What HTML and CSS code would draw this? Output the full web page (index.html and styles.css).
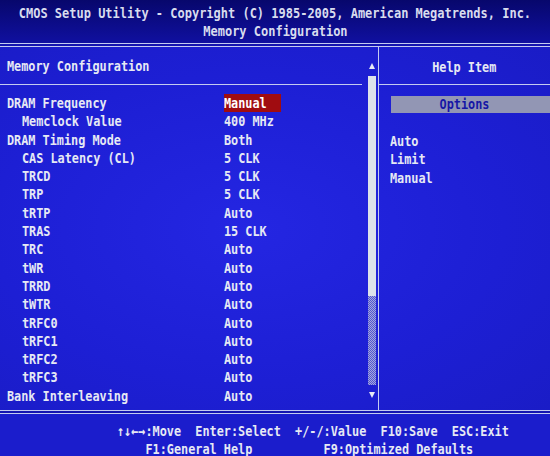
FILE: index.html
```html
<!DOCTYPE html>
<html lang="en">
<head>
<meta charset="utf-8">
<title>CMOS Setup Utility - Memory Configuration</title>
<link rel="stylesheet" href="styles.css">
</head>
<body>
<div class="screen">
  <header class="top">
    <div class="title"><span class="t">CMOS Setup Utility - Copyright (C) 1985-2005, American Megatrends, Inc.</span></div>
    <div class="title"><span class="t">Memory Configuration</span></div>
  </header>
  <div class="rule"></div>
  <main class="body">
    <section class="menu">
      <div class="menu-head"><span class="t">Memory Configuration</span></div>
      <ul class="rows">
        <li class="row"><span class="label"><span class="t">DRAM Frequency</span></span><span class="value sel"><span class="t">Manual</span></span></li>
        <li class="row sub"><span class="label"><span class="t">Memclock Value</span></span><span class="value"><span class="t">400 MHz</span></span></li>
        <li class="row"><span class="label"><span class="t">DRAM Timing Mode</span></span><span class="value"><span class="t">Both</span></span></li>
        <li class="row sub"><span class="label"><span class="t">CAS Latency (CL)</span></span><span class="value"><span class="t">5 CLK</span></span></li>
        <li class="row sub"><span class="label"><span class="t">TRCD</span></span><span class="value"><span class="t">5 CLK</span></span></li>
        <li class="row sub"><span class="label"><span class="t">TRP</span></span><span class="value"><span class="t">5 CLK</span></span></li>
        <li class="row sub"><span class="label"><span class="t">tRTP</span></span><span class="value"><span class="t">Auto</span></span></li>
        <li class="row sub"><span class="label"><span class="t">TRAS</span></span><span class="value"><span class="t">15 CLK</span></span></li>
        <li class="row sub"><span class="label"><span class="t">TRC</span></span><span class="value"><span class="t">Auto</span></span></li>
        <li class="row sub"><span class="label"><span class="t">tWR</span></span><span class="value"><span class="t">Auto</span></span></li>
        <li class="row sub"><span class="label"><span class="t">TRRD</span></span><span class="value"><span class="t">Auto</span></span></li>
        <li class="row sub"><span class="label"><span class="t">tWTR</span></span><span class="value"><span class="t">Auto</span></span></li>
        <li class="row sub"><span class="label"><span class="t">tRFC0</span></span><span class="value"><span class="t">Auto</span></span></li>
        <li class="row sub"><span class="label"><span class="t">tRFC1</span></span><span class="value"><span class="t">Auto</span></span></li>
        <li class="row sub"><span class="label"><span class="t">tRFC2</span></span><span class="value"><span class="t">Auto</span></span></li>
        <li class="row sub"><span class="label"><span class="t">tRFC3</span></span><span class="value"><span class="t">Auto</span></span></li>
        <li class="row"><span class="label"><span class="t">Bank Interleaving</span></span><span class="value"><span class="t">Auto</span></span></li>
      </ul>
    </section>
    <div class="scroll">
      <span class="arrow up"></span>
      <div class="track"><div class="thumb"></div></div>
      <span class="arrow down"></span>
    </div>
    <aside class="help">
      <div class="help-head"><span class="t">Help Item</span></div>
      <div class="options"><span class="t">Options</span></div>
      <ul class="choices">
        <li><span class="t">Auto</span></li>
        <li><span class="t">Limit</span></li>
        <li><span class="t">Manual</span></li>
      </ul>
    </aside>
  </main>
  <div class="rule"></div>
  <footer class="keys">
    <div class="keyline"><span class="t">↑↓←→:Move  Enter:Select  +/-/:Value  F10:Save  ESC:Exit</span></div>
    <div class="keyline"><span class="t">    F1:General Help          F9:Optimized Defaults</span></div>
  </footer>
</div>
</body>
</html>
```
FILE: styles.css
```css
* { box-sizing: border-box; }

html, body {
  margin: 0;
  padding: 0;
  background: #1a1cc8;
}

.screen {
  width: 550px;
  height: 456px;
  overflow: hidden;
  font-family: "DejaVu Sans Mono", "Liberation Mono", monospace;
  font-weight: bold;
  font-size: 14.5px;
  color: #e6e9f4;
  background: #1d1fd2;
}

.t {
  display: inline-block;
  flex: none;
  white-space: pre;
  transform: scaleX(0.816);
  transform-origin: left center;
}

ul { list-style: none; margin: 0; padding: 0; }

/* header */
.top {
  height: 43px;
  padding-top: 4px;
  background: linear-gradient(#07076c, #1010a0);
  color: #d8dcee;
}
.title {
  display: flex;
  justify-content: center;
  height: 18px;
  line-height: 18px;
  font-size: 14.7px;
}
.title .t { transform-origin: center center; }

.rule {
  height: 4px;
  border-top: 1px solid #c4cbf0;
  border-bottom: 1px solid #c4cbf0;
  background: #1414b0;
}

/* main body */
.body {
  display: flex;
  height: 363px;
  background: radial-gradient(ellipse at 45% 50%, #2426e2 0%, #1d1fd4 60%, #1a1cc6 100%);
}

.menu {
  width: 364px;
  flex: none;
}
.menu-head {
  height: 38px;
  margin-right: 2px;
  padding: 10px 0 0 7px;
  line-height: 19px;
  border-bottom: 1px solid #c4cbf0;
}
.rows { padding-top: 9px; }
.row {
  display: flex;
  height: 18.3px;
  line-height: 18.3px;
}
.label {
  width: 224px;
  flex: none;
  padding-left: 7px;
}
.row.sub .label { padding-left: 22px; }
.value { flex: none; width: 57px; }
.value.sel { background: #a00c10; color: #ffffff; }

/* scrollbar */
.scroll {
  width: 14px;
  flex: none;
  display: flex;
  flex-direction: column;
  align-items: flex-start;
  padding: 16px 0 0 4px;
  gap: 7px;
}
.arrow {
  display: block;
  width: 0;
  height: 0;
  margin-left: 1px;
  border-left: 3px solid transparent;
  border-right: 3px solid transparent;
}
.arrow.up { border-bottom: 6px solid #e6eaf4; }
.arrow.down { border-top: 6px solid #e6eaf4; }
.track {
  width: 8px;
  height: 309px;
  background: repeating-conic-gradient(#a6aad6 0 25%, #5054d8 0 50%) 0 0 / 2px 2px;
}
.thumb {
  height: 220px;
  background: #dde3ea;
}

/* help panel */
.help {
  flex: 1;
  border-left: 1px solid #c4cbf0;
}
.help-head {
  display: flex;
  justify-content: center;
  height: 38px;
  padding-top: 11px;
  line-height: 19px;
  border-bottom: 1px solid #c4cbf0;
}
.help-head .t, .options .t { transform-origin: center center; }
.options {
  display: flex;
  justify-content: center;
  margin: 11px 0 0 12px;
  height: 17px;
  line-height: 17px;
  padding-right: 12px;
  background: #9296b4;
  color: #1616a6;
}
.choices {
  margin-top: 19px;
  padding-left: 11px;
}
.choices li {
  height: 18.3px;
  line-height: 18.3px;
}

/* footer */
.keys {
  height: 42px;
  padding: 8px 0 0 117px;
  background: #1b1dcc;
}
.keyline {
  height: 18px;
  line-height: 18px;
}
```
